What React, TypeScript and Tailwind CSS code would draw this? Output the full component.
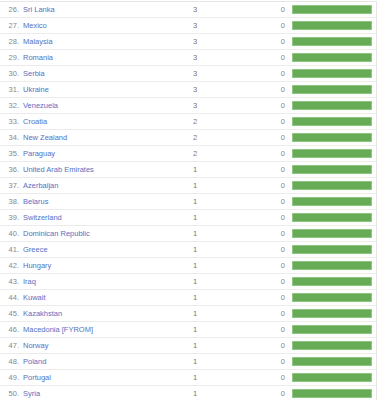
import React from "react";

const rows: [number, string, number][] = [
  [26, "Sri Lanka", 3],
  [27, "Mexico", 3],
  [28, "Malaysia", 3],
  [29, "Romania", 3],
  [30, "Serbia", 3],
  [31, "Ukraine", 3],
  [32, "Venezuela", 3],
  [33, "Croatia", 2],
  [34, "New Zealand", 2],
  [35, "Paraguay", 2],
  [36, "United Arab Emirates", 1],
  [37, "Azerbaijan", 1],
  [38, "Belarus", 1],
  [39, "Switzerland", 1],
  [40, "Dominican Republic", 1],
  [41, "Greece", 1],
  [42, "Hungary", 1],
  [43, "Iraq", 1],
  [44, "Kuwait", 1],
  [45, "Kazakhstan", 1],
  [46, "Macedonia [FYROM]", 1],
  [47, "Norway", 1],
  [48, "Poland", 1],
  [49, "Portugal", 1],
  [50, "Syria", 1],
];

export default function App() {
  return (
    <div className="w-[378px] h-[400px] overflow-hidden bg-white pt-[1px] font-['Liberation_Sans',Arial,sans-serif] text-[7.5px]">
      <div className="border-t border-r border-[#e6e6e6] mr-[1px]">
        {rows.map(([n, name, count]) => (
          <div key={n} className="flex items-center h-[16px] border-b border-[#ececec]">
            <span className="w-[19px] text-right text-[#888]">{n}.</span>
            <span className="ml-[4px] w-[137px] text-[#5670c2] whitespace-nowrap">{name}</span>
            <span className="w-[70px] text-center text-[#777]">{count}</span>
            <span className="w-[55px] text-right text-[#888]">0</span>
            <span className="ml-[7px] w-[80px] h-[9px] bg-[#67ab57] border border-[#8fc682]" />
          </div>
        ))}
      </div>
    </div>
  );
}
